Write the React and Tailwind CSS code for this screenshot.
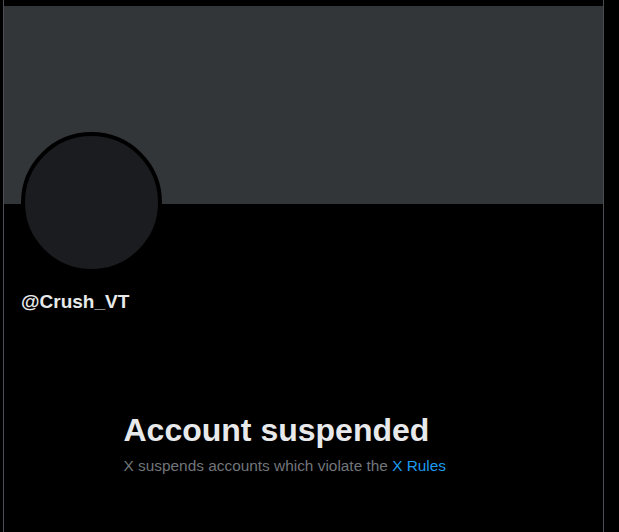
export default function App() {
  return (
    <div className="w-full h-[532px] bg-black overflow-hidden" style={{ fontFamily: '"Liberation Sans", Arial, sans-serif' }}>
      <div className="ml-[3px] w-[601px] h-full border-x border-[#4a4d51] pt-[6px]">
        <div className="h-[198px] bg-[#333639]" />
        <div className="px-[17px]">
          <div className="-mt-[72px] w-[141px] h-[141px] rounded-full border-4 border-black bg-[#1a1c1f]" />
          <div className="mt-[17px] text-[19px] leading-[24px] font-bold text-[#e7e9ea]">@Crush_VT</div>
        </div>
        <div className="mx-auto w-[360px] mt-[98px]">
          <h1 className="text-[32px] leading-[36px] font-bold text-[#e7e9ea]">Account suspended</h1>
          <p className="mt-[8px] text-[15.4px] leading-[20px] text-[#71767b]">
            X suspends accounts which violate the <span className="text-[#1d9bf0]">X Rules</span>
          </p>
        </div>
      </div>
    </div>
  );
}
